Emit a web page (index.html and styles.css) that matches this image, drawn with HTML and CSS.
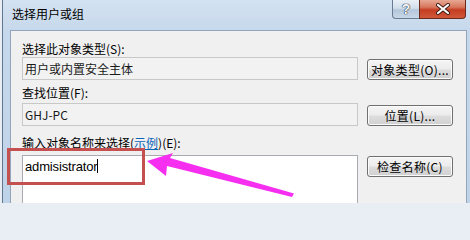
FILE: index.html
```html
<!DOCTYPE html>
<html lang="zh-CN">
<head>
<meta charset="utf-8">
<title>选择用户或组</title>
<link rel="stylesheet" href="styles.css">
</head>
<body>
<div class="desktop">
  <div class="window">
    <div class="titlebar">
      <span class="title">选择用户或组</span>
      <div class="caption">
        <div class="cap-btn help">?</div>
        <div class="cap-btn close">
          <svg width="16" height="12" viewBox="0 0 16 12">
            <path d="M3 2 L13 10 M13 2 L3 10" stroke="#3a1a14" stroke-width="4" stroke-linecap="round"/>
            <path d="M3 2 L13 10 M13 2 L3 10" stroke="#ffffff" stroke-width="2.2" stroke-linecap="round"/>
          </svg>
        </div>
      </div>
    </div>
    <div class="client">
      <div class="label l1">选择此对象类型(S):</div>
      <div class="row r1">
        <div class="field">用户或内置安全主体</div>
        <div class="btn">对象类型(O)...</div>
      </div>
      <div class="label l2">查找位置(F):</div>
      <div class="row r2">
        <div class="field">GHJ-PC</div>
        <div class="btn">位置(L)...</div>
      </div>
      <div class="label l3">输入对象名称来选择(<span class="link">示例</span>)(E):</div>
      <div class="row r3">
        <div class="textarea"><span class="typed">admisistrator</span><span class="caret"></span></div>
        <div class="btn">检查名称(C)</div>
      </div>
    </div>
  </div>
</div>
<div class="highlight"></div>
<svg class="arrow" width="470" height="203" viewBox="0 0 470 203">
  <polygon points="147,161 173,153 170,158 294,193.5 292,197 167,166 166,176" fill="#f52ef0"/>
</svg>
</body>
</html>
```
FILE: styles.css
```css
html, body {
  margin: 0;
  padding: 0;
  width: 470px;
  height: 203px;
  overflow: hidden;
}
body {
  position: relative;
  background: #e9eef4;
  font-family: "Noto Sans CJK SC", "Liberation Sans", sans-serif;
  font-size: 12px;
  color: #000;
}
.desktop {
  padding-left: 2px;
  height: 203px;
}
.window {
  border-left: 1px solid #62768e;
  background: linear-gradient(180deg, #d4e2f1 0%, #c6d8eb 15%, #bfd3e8 100%);
  padding: 0 3px 0 7px;
  height: 203px;
  box-sizing: border-box;
}
.titlebar {
  height: 30px;
  display: flex;
  align-items: flex-start;
}
.title {
  margin-left: 2px;
  margin-top: 6px;
  line-height: 16px;
  font-size: 12px;
  color: #000;
}
.caption {
  margin-left: auto;
  margin-right: 1px;
  display: flex;
}
.cap-btn {
  height: 19px;
  box-sizing: border-box;
  display: flex;
  align-items: center;
  justify-content: center;
}
.help {
  width: 27px;
  border: 1px solid #6a7c92;
  border-top: none;
  border-right: none;
  border-radius: 0 0 0 4px;
  background: linear-gradient(180deg, #e9eff6 0%, #d3dfec 45%, #b4c6da 55%, #c9d8e8 100%);
  color: #f4f6f9;
  font-family: "Liberation Sans", sans-serif;
  font-weight: bold;
  font-size: 14px;
  text-shadow: 0 0 1px #2a3644, 0 0 1px #2a3644, 0 0 1px #2a3644;
}
.close {
  width: 47px;
  border: 1px solid #6a2a1e;
  border-top: none;
  border-radius: 0 0 4px 0;
  background: linear-gradient(180deg, #e7a893 0%, #d7765d 40%, #c53d22 55%, #d1583b 100%);
}
.client {
  border: 1px solid #93a5ba;
  border-bottom: none;
  background: #f0f0f0;
  padding: 10px 0 0 11px;
  height: 173px;
  box-sizing: border-box;
  overflow: hidden;
}
.label {
  line-height: 16px;
  height: 16px;
  white-space: nowrap;
}
.l2 { margin-top: 5px; }
.l3 { margin-top: 9px; }
.row {
  display: grid;
  grid-template-columns: 336px 86px;
  column-gap: 9px;
}
.r2 { margin-top: 2px; }
.r3 { margin-top: 4px; }
.field {
  height: 23px;
  box-sizing: border-box;
  border: 1px solid #c8c8c8;
  background: #f2f2f2;
  padding-left: 2px;
  line-height: 21px;
  color: #1a1a1a;
}
.btn {
  align-self: end;
  height: 21px;
  box-sizing: border-box;
  border: 1px solid #707070;
  border-radius: 3px;
  background: linear-gradient(180deg, #f4f4f4 0%, #ececec 48%, #dddddd 52%, #d0d0d0 100%);
  box-shadow: inset 0 0 0 1px #fbfbfb;
  text-align: center;
  line-height: 19px;
  white-space: nowrap;
  letter-spacing: 0.3px;
}
.r3 .btn {
  align-self: start;
  margin-top: 1px;
}
.link {
  color: #0a64b8;
  text-decoration: underline;
}
.textarea {
  height: 48px;
  box-sizing: border-box;
  border: 1px solid #a9abb2;
  border-bottom: none;
  background: #ffffff;
  padding: 3px 0 0 2px;
  line-height: 16px;
  font-family: "Liberation Sans", sans-serif;
  font-size: 13px;
}
.typed {
  letter-spacing: -0.15px;
}
.caret {
  display: inline-block;
  width: 0;
  height: 14px;
  border-left: 1px solid #000;
  vertical-align: -2px;
}
.highlight {
  position: absolute;
  left: 7px;
  top: 148px;
  width: 138px;
  height: 37px;
  box-sizing: border-box;
  border: 3px solid #c4514f;
}
.arrow {
  position: absolute;
  left: 0;
  top: 0;
}
```
